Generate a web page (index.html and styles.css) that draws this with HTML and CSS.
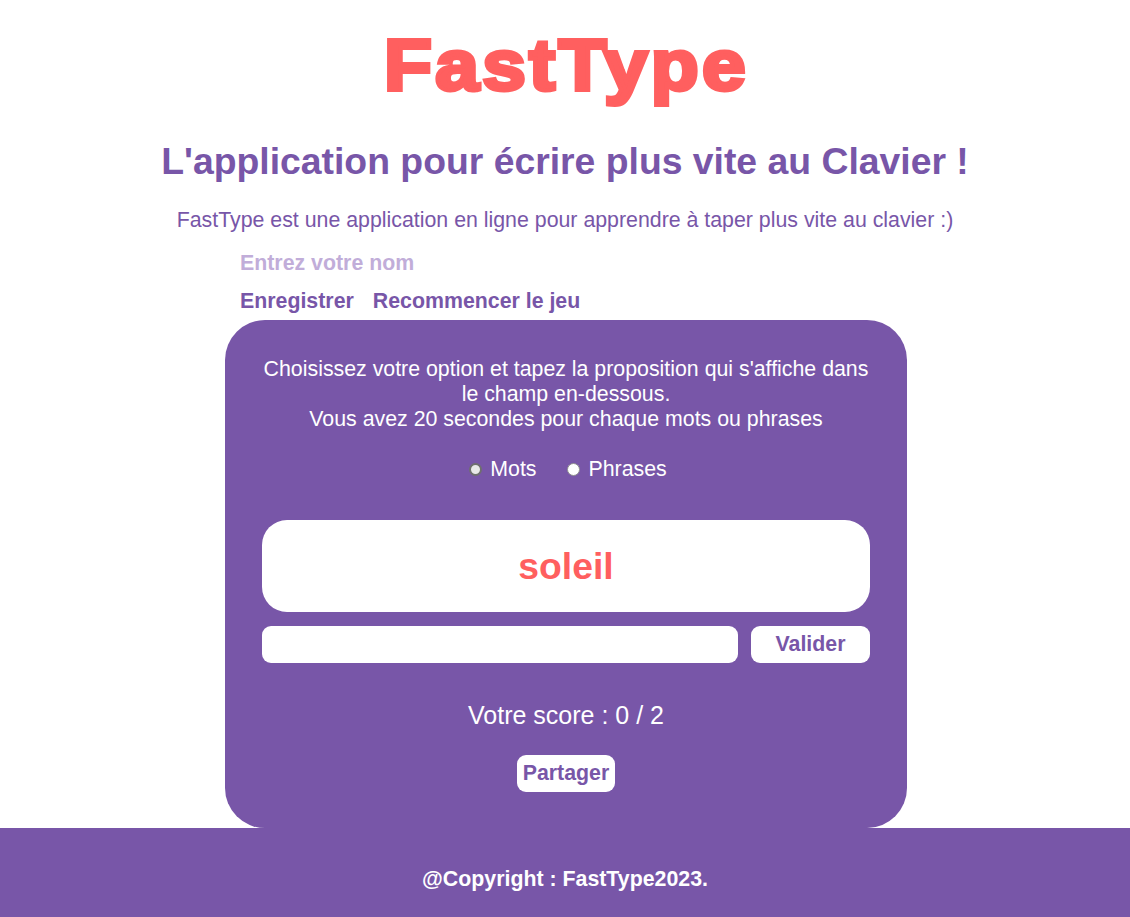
FILE: index.html
```html
<!DOCTYPE html>
<html lang="fr">
<head>
<meta charset="utf-8">
<title>FastType</title>
<link rel="stylesheet" href="styles.css">
</head>
<body>
<header class="header">
  <h1 class="logo">FastType</h1>
  <h2 class="tagline">L'application pour écrire plus vite au Clavier !</h2>
  <p class="intro">FastType est une application en ligne pour apprendre à taper plus vite au clavier :)</p>
</header>
<main class="main">
  <div class="controls">
    <input class="name-input" type="text" placeholder="Entrez votre nom">
    <div class="actions">
      <button class="link-btn">Enregistrer</button>
      <button class="link-btn">Recommencer le jeu</button>
    </div>
  </div>
  <section class="card">
    <p class="instructions">Choisissez votre option et tapez la proposition qui s'affiche dans le champ en-dessous.<br>Vous avez 20 secondes pour chaque mots ou phrases</p>
    <div class="options">
      <label class="option"><input type="radio" name="mode" class="radio" checked><span>Mots</span></label>
      <label class="option"><input type="radio" name="mode" class="radio"><span>Phrases</span></label>
    </div>
    <div class="word-box"><span class="word">soleil</span></div>
    <div class="answer-row">
      <input class="answer" type="text">
      <button class="btn btn-valider">Valider</button>
    </div>
    <p class="score">Votre score : 0 / 2</p>
    <button class="btn btn-share">Partager</button>
  </section>
</main>
<footer class="footer">
  <p>@Copyright : FastType2023.</p>
</footer>
</body>
</html>
```
FILE: styles.css
```css
* { box-sizing: border-box; }
html, body { margin: 0; padding: 0; }
body {
  font-family: "Liberation Sans", Arial, sans-serif;
  font-size: 16pt;
  background: #ffffff;
  color: #7856a8;
}
.header {
  display: flex;
  flex-direction: column;
  align-items: center;
  padding-top: 25px;
}
.logo {
  margin: 0;
  font-size: 72px;
  line-height: 80px;
  font-weight: 700;
  letter-spacing: 3px;
  padding-left: 3px;
  -webkit-text-stroke: 4px #ff5f5f;
  color: #ff5f5f;
  transform: scaleX(1.09);
}
.tagline {
  margin: 35px 0 0;
  font-size: 28pt;
  line-height: 43px;
  font-weight: 700;
  color: #7856a8;
}
.intro {
  margin: 25px 0 0;
  font-size: 16pt;
  line-height: 24px;
  color: #7856a8;
}
.main {
  display: flex;
  flex-direction: column;
  align-items: center;
}
.controls {
  width: 682px;
  display: flex;
  flex-direction: column;
  align-items: flex-start;
  padding-left: 16px;
}
.name-input {
  border: none;
  outline: none;
  padding: 0;
  margin-top: 19px;
  font-family: inherit;
  font-size: 16pt;
  font-weight: 700;
  height: 24px;
  line-height: 24px;
  width: 300px;
  color: #7856a8;
  background: transparent;
}
.name-input::placeholder { color: #c1add9; opacity: 1; }
.actions {
  display: flex;
  gap: 19px;
  margin-top: 14px;
}
.link-btn {
  border: none;
  background: transparent;
  padding: 0;
  font-family: inherit;
  font-size: 16pt;
  font-weight: 700;
  color: #7856a8;
  line-height: 24px;
  height: 24px;
}
.card {
  width: 682px;
  margin-top: 7px;
  margin-left: 2px;
  background: #7856a8;
  border-radius: 40px;
  padding: 37px 37px 36px;
  display: flex;
  flex-direction: column;
  align-items: center;
  color: #ffffff;
}
.instructions {
  margin: 0;
  text-align: center;
  font-size: 16pt;
  line-height: 25px;
  width: 608px;
}
.options {
  display: flex;
  gap: 31px;
  margin-top: 25px;
  font-size: 16pt;
  line-height: 25px;
  padding-left: 4px;
}
.option { display: flex; align-items: center; }
.radio {
  appearance: none;
  -webkit-appearance: none;
  width: 13px;
  height: 13px;
  margin: 0 8px 0 0;
  border-radius: 50%;
  background: #ffffff;
  border: 1px solid #8f8f8f;
}
.radio:checked {
  background: #e9e9e9;
  border: 2px solid #6f6f6f;
}
.word-box {
  margin-top: 38px;
  width: 608px;
  height: 92px;
  background: #ffffff;
  border-radius: 25px;
  display: flex;
  align-items: center;
  justify-content: center;
}
.word {
  font-size: 28pt;
  font-weight: 700;
  color: #ff5f5f;
}
.answer-row {
  margin-top: 14px;
  width: 608px;
  display: flex;
  gap: 13px;
}
.answer {
  flex: 1;
  height: 37px;
  border: none;
  border-radius: 9px;
  background: #ffffff;
  outline: none;
}
.btn {
  border: none;
  background: #ffffff;
  border-radius: 9px;
  font-family: inherit;
  font-size: 16pt;
  font-weight: 700;
  color: #7856a8;
}
.btn-valider {
  width: 119px;
  height: 37px;
}
.score {
  margin: 38px 0 0;
  font-size: 25px;
  line-height: 29px;
}
.btn-share {
  margin-top: 25px;
  height: 37px;
  padding: 0 6px;
}
.footer {
  background: #7856a8;
  padding: 39px 0 40px;
}
.footer p {
  margin: 0;
  text-align: center;
  color: #ffffff;
  font-size: 16pt;
  line-height: 24px;
  font-weight: 700;
}
```
